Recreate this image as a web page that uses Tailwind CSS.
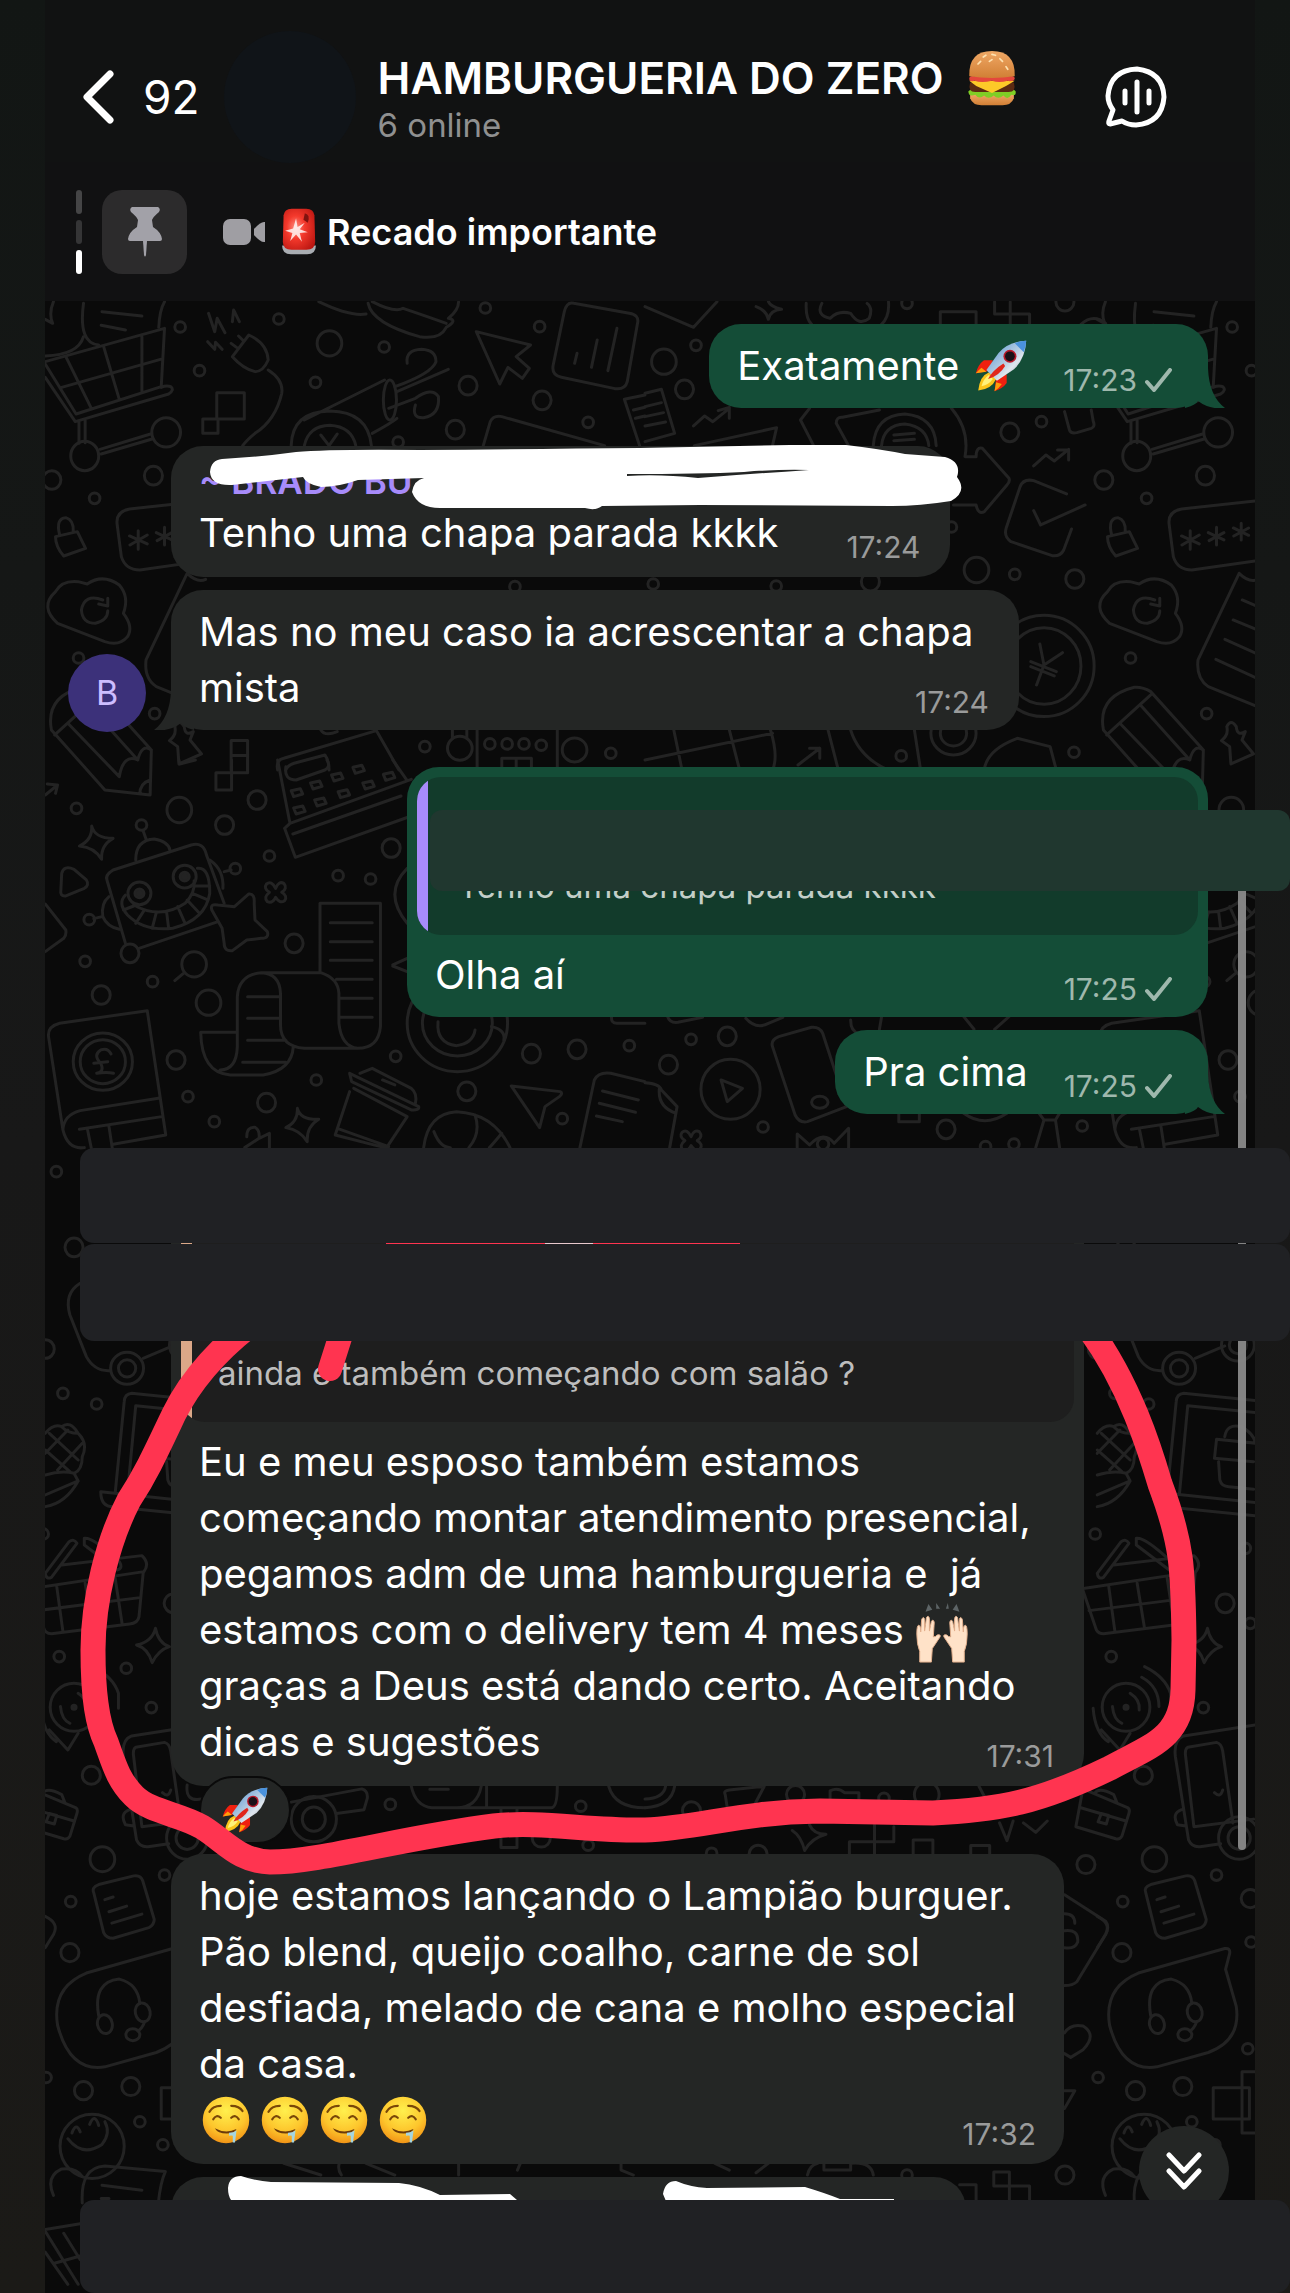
<!DOCTYPE html>
<html lang="pt-BR">
    <head>
        <meta charset="UTF-8">
        <meta name="viewport" content="width=device-width, initial-scale=1.0">
        <title>Hamburgueria do Zero</title>
        <script src="https://cdn.jsdelivr.net/npm/@tailwindcss/browser@4"></script>
    </head>
    <body class="bg-[#181818] font-['Inter','Liberation_Sans',sans-serif] text-white">

        <!-- Emojis -->
        <svg class="absolute w-0 h-0" aria-hidden="true">
          <defs>
            <linearGradient id="gBun" x1="0" y1="0" x2="0" y2="1"><stop offset="0" stop-color="#f0a865"/><stop offset="1" stop-color="#d17f35"/></linearGradient>
            <radialGradient id="gFace" cx=".5" cy=".3" r=".75"><stop offset="0" stop-color="#fff04d"/><stop offset=".6" stop-color="#fdc52c"/><stop offset="1" stop-color="#ef8a12"/></radialGradient>
            <linearGradient id="gRocket" x1="0" y1="0" x2="1" y2="1"><stop offset="0" stop-color="#4a8fd2"/><stop offset=".5" stop-color="#b4cbe2"/><stop offset=".65" stop-color="#dfe6ee"/><stop offset="1" stop-color="#7f8c9b"/></linearGradient>
            <radialGradient id="gSiren" cx=".4" cy=".45" r=".7"><stop offset="0" stop-color="#ff8d80"/><stop offset=".4" stop-color="#f4392c"/><stop offset="1" stop-color="#b91510"/></radialGradient>
            <symbol id="rocket" viewBox="0 0 64 64">
              <path d="M22 25 L11 25 Q4 30 1 41 L17 38Z M39 42 L39 53 Q34 60 24 63 L26 47Z" fill="#f0200f"/>
              <path d="M8 34 Q4 37 1 41 L14 39Z M33 54 Q29 60 24 63 L26 52Z" fill="#ff9d0a"/>
              <path d="M17 40 Q6 44 4 62 Q20 61 26 48Z" fill="#fbc51b"/>
              <path d="M17 43 Q10 48 8 57 Q17 55 22 48Z" fill="#fff27a"/>
              <path d="M63 1 Q41 2 29 16 L14 37 L27 50 L48 36 Q62 23 63 1Z" fill="url(#gRocket)"/>
              <path d="M63 1 Q55 1 49 4 L60 15 Q63 8 63 1Z" fill="#4a92dd"/>
              <path d="M35 29 Q22 37 16 48 Q30 44 37 32Z" fill="#e1261c"/>
              <circle cx="43" cy="20" r="8" fill="#b9192a"/><circle cx="43" cy="20" r="6" fill="#1b1118"/>
            </symbol>
            <symbol id="burger" viewBox="0 0 64 64">
              <path d="M7 50 H57 V55 Q54 63 44 63 H20 Q10 63 7 55Z" fill="url(#gBun)"/>
              <path d="M5 47 Q9 43 14 46 H50 Q56 43 59 47 Q60 53 54 51 Q50 58 45 52 Q39 57 34 52 Q28 57 23 52 Q17 57 13 51 Q5 54 5 47Z" fill="#7fce25"/>
              <path d="M7 37 H57 Q60 48 51 48 H13 Q4 48 7 37Z" fill="#5b2a12"/>
              <path d="M6 35 H58 L48 41 L32 49 L14 41Z" fill="#fdc928"/>
              <path d="M6 33 Q6 29 12 30 H52 Q58 29 58 33 Q56 37 50 35 Q40 38 32 35 Q20 38 12 35 Q6 37 6 33Z" fill="#e4473c"/>
              <path d="M6 30 Q5 1 32 1 Q59 1 58 30 Q32 34 6 30Z" fill="url(#gBun)"/>
              <path d="M22 8 l3 -2 M32 5 l4 1 M41 10 l3 3 M29 13 l3 -2 M16 16 l3 -3 M48 19 l2 3" stroke="#ffe2b0" stroke-width="2" stroke-linecap="round"/>
            </symbol>
            <symbol id="siren" viewBox="0 0 48 64">
              <path d="M1 51 H47 Q47 63 35 63 H13 Q1 63 1 51Z" fill="#a9adb2"/>
              <path d="M2 46 L3 10 Q4 1 14 1 H34 Q44 1 45 10 L46 46 Q46 57 34 57 H14 Q2 57 2 46Z" fill="url(#gSiren)"/>
              <path d="M32 7 Q40 9 36 20 L30 16Z" fill="#80130f"/>
              <path d="M20 14 L22 26 L32 20 L25 29 L36 33 L25 34 L28 46 L20 36 L12 45 L15 34 L5 31 L16 28Z" fill="#fff" opacity=".8"/>
            </symbol>
            <symbol id="hands" viewBox="0 0 54 64">
              <path d="M10 10 L13 2 L17 8Z M21 7 L21 1 L25 7Z M31 7 L33 1 L34 7Z M38 8 L42 2 L45 10Z" fill="#5d6466"/>
              <path id="hand" d="M4 62 L4 51 Q1 44 1 33 Q1 24 3 24 Q5 24 5 31 L6 18 Q8 14 9 18 L9 30 L11 16 Q13 13 14 17 L14 30 L16 20 Q18 17 19 21 L18 36 Q21 36 22 34 Q26 33 25 36 L17 48 L16 62Z" fill="#ffe2c8" stroke="#e3b08c" stroke-width="1"/>
              <use href="#hand" transform="matrix(-1 0 0 1 54 0)"/>
            </symbol>
            <symbol id="drool" viewBox="0 0 64 64">
              <circle cx="32" cy="32" r="31" fill="url(#gFace)"/>
              <path d="M10 21 Q14 13 25 13 M39 13 Q50 13 54 20 M15 31 Q19 24 25 29 M39 29 Q45 24 49 31" fill="none" stroke="#7a4708" stroke-width="3" stroke-linecap="round"/>
              <path d="M17 43 Q32 51 46 44 Q44 50 33 50 Q21 50 17 43Z" fill="#6a3a0b"/>
              <path d="M36 49 Q42 49 46 46 L44 62 L41 62 L41 53 Q39 52 36 53Z" fill="#a5d5e0"/>
            </symbol>
          </defs>
        </svg>

        <div class="relative min-h-screen overflow-hidden bg-linear-to-b from-[#121614] via-[#181818] to-[#1b1a17] pl-[45px] pr-[35px]">
          <main class="relative min-h-screen bg-[#0a0a0a] overflow-hidden">

            <!-- Papel de parede -->
            <svg class="absolute inset-0 w-full h-full [&_*]:[vector-effect:non-scaling-stroke]" fill="none" stroke="#232323" stroke-width="3" stroke-linecap="round" stroke-linejoin="round" aria-hidden="true">
              <defs>
                <ellipse id="s" rx="13" ry="16"/>
                <ellipse id="m" rx="22" ry="28"/>
                <ellipse id="l" rx="30" ry="38"/>
                <ellipse id="s2" rx="13" ry="14"/>
                <ellipse id="m2" rx="22" ry="24"/>
                <ellipse id="l2" rx="30" ry="33"/>
                <g id="tile">
                  <g transform="translate(-45 290) scale(.4113 .3333)">
                    <path d="M203 40Q190 160 240 165M400 35Q388 60 386 112M248 65L345 78M246 106L305 120M130 35Q118 70 128 100L110 88M110 198Q190 195 203 140"/>
                    <path d="M110 215L400 115L392 290L185 372L110 222M110 262L183 395L410 312Q425 300 415 290Q405 285 392 292M160 200L222 355M252 170L290 328M345 140V305M150 292L390 208M192 395V460M207 390V458M243 478L366 432M246 492L370 447"/>
                    <ellipse cx="206" cy="498" rx="34" ry="44"/><ellipse cx="404" cy="427" rx="35" ry="44"/>
                    <path d="M135 740L188 725L208 775L155 798Q135 770 135 740ZM145 735Q135 685 160 683Q180 690 178 725"/>
                    <path d="M500 632L315 657Q280 665 285 705L295 800Q305 840 340 840L500 812M336 722V778M315 738L358 762M358 735L316 765M400 712V765M380 728L418 750M418 728L382 752M460 700V750M441 714L478 736M478 714L442 738"/>
                    <path d="M135 905Q150 870 190 875L212 882Q250 850 290 885Q315 920 300 970Q325 1010 310 1040Q290 1070 255 1055L140 1000Q95 950 135 905ZM250 930Q205 910 198 960Q200 1000 232 1000Q262 990 262 962M262 925V948L240 942"/>
                    <path d="M455 850L355 1110Q350 1165 380 1190L500 1250M455 850Q480 880 500 868"/>
                    <path d="M200 1192Q110 1220 125 1320L255 1500L365 1515L368 1380L240 1205Q220 1190 200 1192M133 1335L240 1215M165 1300L290 1460M215 1245L335 1410M290 1460Q300 1390 335 1410Q345 1360 368 1380M340 1512Q340 1480 365 1470"/>
                    <path d="M412 1352Q430 1335 425 1310Q435 1285 448 1310Q450 1340 470 1325L462 1350L490 1392L435 1422L432 1370Z"/>
                    <use href="#s" x="438" y="111"/><use href="#m" x="373" y="557"/><use href="#m" x="126" y="570"/><use href="#s" x="230" y="625"/><use href="#s" x="191" y="1104"/><use href="#s" x="376" y="1271"/><use href="#s" x="485" y="242"/>
                  </g>
                  <g transform="translate(-45 760) scale(.4113 .3333)">
                    <path d="M260 360Q255 345 275 330L465 255Q495 245 502 285L545 430M260 360L305 550M338 565L530 485M330 300Q330 240 375 237Q410 245 413 270M355 237L348 212"/>
                    <ellipse cx="339" cy="400" rx="28" ry="34"/><ellipse cx="449" cy="350" rx="28" ry="34"/>
                    <ellipse cx="339" cy="400" rx="11" ry="13" fill="#232323"/><ellipse cx="449" cy="350" rx="11" ry="13" fill="#232323"/>
                    <path d="M305 405Q285 430 310 465Q350 515 420 505Q500 480 510 400Q510 320 480 325M325 435Q390 480 450 430Q475 400 472 362M300 450L325 438M330 490L350 452M370 505L380 458M410 505L405 455M450 490L432 440M485 460L455 420M505 420L468 400M510 378H472"/>
                    <path d="M265 410Q245 430 250 470Q260 500 290 508M248 470L228 476M510 300Q545 330 542 385M545 335L562 330"/>
                    <path d="M223 198Q230 235 275 235Q245 255 247 298Q230 262 193 258Q225 240 223 198ZM150 340Q155 315 180 328L210 360Q218 375 205 385L160 408Q145 410 148 390Z"/>
                    <path d="M110 432L160 510Q162 525 155 535L110 575M110 105L140 75L115 72M140 75L135 100M446 640L425 662"/>
                    <path d="M118 830Q115 800 145 790L358 752L403 1125L275 1153M118 830L153 1110Q165 1170 205 1163M153 1110Q155 1065 195 1052L385 1015M193 1108L393 1070M213 1110L222 1165M265 1100L273 1165"/>
                    <ellipse cx="250" cy="905" rx="72" ry="86"/><ellipse cx="250" cy="905" rx="55" ry="66"/>
                    <path d="M270 882Q262 862 245 870Q225 885 245 910Q255 935 235 940Q260 935 276 940M228 910L262 905"/>
                    <use href="#l" x="436" y="150"/><use href="#m" x="246" y="705"/><use href="#m" x="316" y="580"/><use href="#l" x="507" y="728"/><use href="#l" x="472" y="613"/><use href="#m" x="428" y="900"/>
                    <use href="#s" x="344" y="195"/><use href="#s" x="217" y="479"/><use href="#s" x="572" y="326"/><use href="#s" x="186" y="145"/><use href="#s" x="207" y="604"/><use href="#s" x="371" y="665"/><use href="#s" x="457" y="1010"/><use href="#s" x="137" y="1235"/>
                  </g>
                  <g transform="translate(-45 1220) scale(.4113 .3333)">
                    <path d="M195 190Q155 220 170 285L210 410Q230 455 268 452M348 415L420 378"/>
                    <ellipse cx="309" cy="445" rx="40" ry="48"/><ellipse cx="309" cy="445" rx="21" ry="26"/><ellipse cx="452" cy="375" rx="40" ry="48"/><ellipse cx="452" cy="375" rx="21" ry="26"/>
                    <path d="M110 640Q130 610 150 620Q170 600 190 640Q215 670 200 710Q200 750 180 760L190 783Q160 850 110 860M110 765Q150 750 180 760M190 783L110 825M120 640L190 720M140 750L200 670M110 700L165 630M110 690L170 755M150 620Q165 640 190 640"/>
                    <path d="M498 542L320 520Q303 522 302 545L280 820M498 578L330 557L310 820M245 815L498 848M245 815Q245 860 275 860L498 888"/>
                    <path d="M498 670L400 658L395 715L490 725M405 725L408 780Q412 800 430 800L490 808M420 650Q425 610 460 620Q490 640 495 670"/>
                    <path d="M110 1060L168 965Q180 955 187 970L125 1072Q112 1080 110 1060M205 955Q225 950 290 1025Q300 1045 285 1050L205 975ZM150 1035L345 1007Q365 1030 350 1055L80 1105M348 1060L338 1190Q335 1210 315 1212L135 1240Q115 1245 108 1230L75 1110M90 1172L340 1133M138 1100L153 1235M207 1090L225 1225M280 1075L297 1212"/>
                    <path d="M378 1225Q385 1270 412 1280Q385 1290 370 1328Q360 1285 332 1275Q370 1265 378 1225Z"/>
                    <ellipse cx="180" cy="1462" rx="58" ry="72"/><ellipse cx="180" cy="1462" rx="5" ry="6" fill="#232323"/>
                    <path d="M225 1340Q275 1370 288 1420V1465M218 1372Q260 1400 260 1460M190 1420Q215 1440 212 1470M147 1460Q150 1500 170 1510M100 1465Q105 1540 137 1565M120 1530L165 1590L190 1540"/>
                    <use href="#m" x="180" y="82"/><use href="#m" x="110" y="387"/><use href="#s" x="153" y="520"/><use href="#s" x="235" y="552"/><use href="#s" x="105" y="942"/><use href="#m" x="421" y="1150"/><use href="#s" x="470" y="985"/><use href="#s" x="482" y="1210"/><use href="#s" x="144" y="1310"/><use href="#s" x="307" y="1345"/><use href="#s" x="368" y="1463"/>
                  </g>
                  <g transform="translate(-45 1700) scale(.4113 .3782)">
                    <path d="M75 235L185 285Q190 290 187 300L170 360Q165 370 155 367L58 335L75 235M70 285L180 320M105 245Q115 230 150 250L158 272M120 300L138 305L132 328L112 322Z"/>
                    <path d="M500 65L320 95Q295 105 300 150L332 370Q340 390 360 388L410 380M330 125L400 112Q412 115 415 135L440 325M330 125Q322 130 325 150L345 335L490 315M395 245Q410 260 415 238M315 290Q290 300 305 330L325 333"/>
                    <ellipse cx="455" cy="365" rx="50" ry="56"/><ellipse cx="455" cy="365" rx="27" ry="30"/>
                    <path d="M228 510Q222 495 240 488L325 465Q342 462 347 478L375 580Q375 595 362 602L275 630Q258 630 252 615ZM255 528L275 521M265 560L308 545M272 590L345 566M110 572Q145 590 130 620L110 655"/>
                    <path d="M210 722L420 657Q434 655 432 670L422 712L448 810Q460 900 380 932L255 970Q170 985 140 860Q125 760 210 722ZM240 835Q225 745 290 738Q335 750 340 802M352 850Q345 870 335 875"/>
                    <ellipse cx="255" cy="857" rx="18" ry="25" transform="rotate(-10 255 857)"/><ellipse cx="347" cy="826" rx="18" ry="25" transform="rotate(-10 347 826)"/><ellipse cx="323" cy="885" rx="17" ry="16"/>
                    <ellipse cx="224" cy="1180" rx="78" ry="85"/>
                    <path d="M165 1160Q200 1210 248 1175Q270 1145 255 1115M175 1145Q185 1115 195 1142M218 1122Q230 1090 240 1125"/>
                    <path d="M392 1025H480V1108H392ZM462 983H520V1145H462Z"/>
                    <path d="M130 1310Q110 1260 150 1240Q185 1235 200 1260M200 1330Q195 1235 255 1232L402 1247Q390 1275 385 1330M248 1283L345 1296M246 1318H265M110 1400L195 1385M110 1405L190 1545M110 1460L165 1545M155 1410L195 1480M130 1490L195 1470"/>
                    <use href="#m2" x="222" y="199"/><use href="#l2" x="249" y="421"/><use href="#m2" x="170" y="668"/><use href="#m2" x="203" y="1033"/><use href="#m2" x="318" y="1022"/><use href="#m2" x="482" y="525"/>
                    <use href="#s2" x="400" y="463"/><use href="#s2" x="172" y="533"/><use href="#s2" x="340" y="1115"/><use href="#s2" x="396" y="1176"/><use href="#s2" x="112" y="998"/><use href="#s2" x="476" y="922"/><use href="#s2" x="484" y="640"/>
                  </g>
                </g>
              </defs>
              <use href="#tile"/>
              <use href="#tile" x="1052"/>
              <g transform="translate(-45 290) scale(.4113 .3333)">
                <path d="M565 200L605 135Q650 160 652 210Q640 245 620 245Q590 235 565 200ZM580 138L590 150M562 160L575 172M652 240Q690 270 685 310Q670 390 620 430Q600 450 590 467M507 70L522 125L528 85L547 128M565 95L568 60L582 95M505 155L522 178L524 157L540 178M527 308H594V387H527ZM493 387H530V430H493Z"/>
                <path d="M708 467Q710 365 802 363Q895 365 903 467M740 467Q750 408 802 406Q855 410 865 467M780 435L800 467L820 432M740 390L935 270M905 430Q950 400 965 385M990 220Q985 180 1025 178Q1060 180 1060 215Q1050 250 960 290M965 305L1090 238M1010 345Q1000 385 1030 383Q1070 375 1066 320Q1050 290 1010 325L945 355"/>
                <ellipse cx="948" cy="330" rx="16" ry="60"/>
                <path d="M775 35Q850 80 890 72M895 40Q905 100 1020 140Q1070 150 1085 112Q1115 90 1090 85Q1115 60 1115 35M905 35Q960 70 980 55Q1040 80 1085 100"/>
                <path d="M1158 125L1290 165L1255 200L1287 235L1270 265L1235 232L1215 282ZM1395 40L1530 70Q1555 75 1550 100L1525 275Q1520 300 1495 296L1365 262Q1340 255 1345 225L1372 65Q1378 35 1395 40ZM1403 190L1397 220M1452 150L1438 232M1500 115L1478 242M1175 467L1192 395Q1200 375 1220 380L1470 467M1568 315L1518 328L1555 467M1540 360L1568 352M1545 385L1568 378"/>
                <path d="M562 1352H602V1440M562 1352V1440M562 1397H602M675 1440Q670 1410 690 1405L915 1322L970 1440M695 1440Q700 1425 715 1420L790 1395Q800 1410 800 1440M780 1320Q790 1340 820 1325M1100 1320V1345M1135 1320V1345M1160 1320V1440M1355 1320V1440M1220 1440V1405H1292V1440M1255 1405V1440"/>
                <ellipse cx="1118" cy="1375" rx="30" ry="36"/><ellipse cx="1397" cy="1380" rx="30" ry="36"/>
                <use href="#l" x="801" y="160"/><use href="#m" x="1138" y="287"/><use href="#m" x="1318" y="331"/><use href="#m" x="1107" y="419"/>
                <use href="#s" x="678" y="87"/><use href="#s" x="767" y="277"/><use href="#s" x="934" y="171"/><use href="#s" x="1180" y="54"/><use href="#s" x="1312" y="110"/><use href="#s" x="1430" y="397"/><use href="#s" x="968" y="456"/><use href="#s" x="1252" y="890"/><use href="#s" x="1033" y="1370"/><use href="#s" x="1485" y="1390"/><use href="#s" x="1191" y="1362"/><use href="#s" x="1233" y="1362"/><use href="#s" x="1274" y="1362"/><use href="#s" x="1316" y="1366"/>
              </g>
              <g transform="translate(600 290) scale(.4113 .3333)">
                <path d="M0 50L118 112L175 35M270 50Q295 60 300 88Q305 60 332 58Q305 50 300 35M392 40Q390 85 405 103M592 35Q595 80 575 103M430 40Q415 75 450 85Q470 60 500 70Q520 110 545 85Q555 55 540 40M718 103V65H805V103M850 35V72H935V103M888 35V103M1060 103Q1090 70 1120 100"/>
                <path d="M118 408L145 378L165 395L205 355M178 362L205 352V385M945 528L975 495L995 513L1030 478M1003 480H1030V510M0 310L40 298L72 430L0 455M0 350L40 338M0 380L45 368M0 408L50 396M120 467L320 413L310 467"/>
                <path d="M400 355L378 390L410 467M495 467L465 400Q465 380 480 382L570 360M555 467Q560 375 632 372Q705 380 708 467M575 467Q580 405 632 402Q685 410 690 467M605 435L655 430M605 452L655 448M745 355Q790 420 778 500H805Q805 470 820 475L885 565Q888 575 880 585L825 665Q810 675 805 645H750M1020 365L1032 420Q1035 432 1050 428L1085 415Q1095 410 1090 395L1085 360"/>
                <path d="M1025 612L945 572Q920 565 912 590L878 715Q872 740 890 755L990 797Q1010 800 1018 780L1037 717M945 662L962 705L1070 645"/>
                <ellipse cx="970" cy="1128" rx="122" ry="152"/><ellipse cx="970" cy="1128" rx="90" ry="115"/>
                <path d="M960 1062L970 1125L952 1185M970 1125L1015 1088M938 1115L1000 1145M938 1130L995 1158M1452 930L1500 955M1430 990L1500 1025M1410 1048L1500 1098M1388 1108L1500 1172"/>
                <ellipse cx="750" cy="1330" rx="55" ry="65"/><ellipse cx="750" cy="1330" rx="32" ry="38"/>
                <path d="M825 1440Q830 1380 905 1345L985 1370L1000 1440M372 1425L425 1375V1405M400 1375H425M70 1320L90 1440M205 1320L230 1440M0 1410L310 1330M305 1320Q325 1400 310 1440M445 1320L470 1440M500 1320Q520 1400 590 1440M655 1320L670 1440"/>
                <use href="#l" x="46" y="215"/><use href="#l" x="806" y="840"/><use href="#m" x="96" y="298"/><use href="#m" x="1021" y="35"/><use href="#m" x="887" y="427"/><use href="#m" x="1045" y="867"/><use href="#m" x="548" y="875"/>
                <use href="#s" x="637" y="40"/><use href="#s" x="124" y="166"/><use href="#s" x="964" y="395"/><use href="#s" x="899" y="853"/><use href="#s" x="745" y="711"/><use href="#s" x="623" y="1398"/><use href="#s" x="1043" y="1387"/><use href="#s" x="20" y="882"/><use href="#s" x="319" y="888"/>
              </g>
              <g transform="translate(-45 760) scale(.4113 .3333)">
                <path d="M675 0L705 190L1000 58M692 205L718 292L1000 168M692 205L705 190M712 222L975 108M695 20Q690 60 720 60L790 30Q805 20 795 0M955 0L990 62"/>
                <path d="M708 92l22-6 6 16-22 8zM755 69l22-6 6 16-22 8zM806 45l22-6 6 16-22 8zM858 22l22-6 6 16-22 8zM714 144l22-6 6 16-22 8zM765 120l22-6 6 16-22 8zM822 95l22-6 6 16-22 8zM882 69l22-6 6 16-22 8zM932 43l22-6 6 16-22 8z"/>
                <path d="M605 402Q620 400 618 430L620 480L650 515Q655 535 635 535L600 540L565 572Q545 575 545 550L540 505L515 450Q510 430 530 435L570 440Z"/>
                <path id="clover" d="M670 385Q660 360 648 372Q640 385 655 397Q640 412 650 425Q662 432 670 412Q680 432 692 422Q700 408 685 397Q700 385 690 370Q678 362 670 385Z"/>
                <path d="M435 0L437 12L475 0M525 38H563V90H525ZM563 0V38H602V0M990 325Q930 400 990 490M955 615L990 595M955 618L990 635"/>
                <path d="M778 638V430H925V800Q920 865 870 865H740Q680 860 682 790V700Q680 640 635 638Q580 645 577 710V860Q575 930 535 930M635 638H780Q822 655 824 700V790Q830 860 870 865M577 817H488Q490 940 560 945H640Q710 930 713 860M803 488H905M803 545H905M803 601H905M818 658H905M826 715H905M826 772H905M602 710H680M602 775H680M602 841H695M590 907H695"/>
                <path d="M850 995L815 1125L935 1163M850 940L1018 1040Q1020 1052 1000 1050L855 965ZM875 940L905 925L1000 985Q1015 1000 1010 1030M860 985L990 1070L940 1163M820 1105L945 1160M930 960L960 975"/>
                <path d="M723 1045Q730 1080 775 1078Q745 1100 747 1145Q730 1110 695 1103Q725 1085 723 1045ZM600 1130Q600 1100 620 1102Q632 1110 630 1135L655 1120V1163M630 1135L595 1163"/>
                <path d="M1030 1163Q1040 1060 1110 1055Q1200 1060 1240 1163M1055 1115Q1070 1163 1095 1163M1155 1065Q1170 1120 1140 1163M1220 1120Q1200 1150 1190 1163M1243 978L1362 995Q1370 1000 1360 1010L1325 1040L1312 1103ZM1410 1163L1445 960Q1455 935 1485 940L1568 965M1465 993L1552 1020M1457 1030L1545 1057M1450 1068L1513 1085M1487 770Q1485 790 1500 790H1568"/>
                <ellipse cx="1112" cy="790" rx="122" ry="145"/><ellipse cx="1112" cy="790" rx="85" ry="98"/>
                <path d="M1065 785Q1060 850 1110 857Q1150 850 1155 810M1195 800Q1230 810 1225 840"/>
                <use href="#m" x="625" y="120"/><use href="#m" x="546" y="195"/><use href="#m" x="951" y="264"/><use href="#m" x="715" y="550"/><use href="#m" x="648" y="1028"/><use href="#m" x="1135" y="994"/><use href="#m" x="1292" y="881"/><use href="#m" x="1403" y="868"/>
                <use href="#s" x="655" y="288"/><use href="#s" x="822" y="347"/><use href="#s" x="901" y="357"/><use href="#s" x="521" y="1085"/><use href="#s" x="962" y="889"/><use href="#s" x="769" y="960"/><use href="#s" x="1530" y="857"/><use href="#s" x="1367" y="1076"/>
              </g>
              <g transform="translate(600 760) scale(.4113 .3333)">
                <ellipse cx="208" cy="988" rx="72" ry="90"/><ellipse cx="425" cy="1027" rx="20" ry="18"/><ellipse cx="433" cy="1152" rx="14" ry="17"/>
                <path d="M185 960L237 985L200 1025ZM310 860Q305 840 325 830L405 802Q425 800 432 820L490 1040L395 1085Q375 1090 365 1065ZM55 770Q60 790 80 787L140 772M245 775Q270 810 300 790L335 772M500 780Q500 815 520 820M575 772L570 808M775 770L800 808M850 808L885 770M0 968Q35 970 40 990L78 1040L60 1163M35 985Q30 1040 75 1060M370 1163V1122L400 1155Q435 1110 460 1150L495 1105V1163M617 1055V1085H667V1055M775 1060Q825 1105 880 1060M955 1055L970 1080H998L1010 1055M970 1080L950 1163M998 1080L1008 1163"/>
                <use href="#clover" x="-558" y="745"/>
                <use href="#m" x="200" y="829"/><use href="#m" x="57" y="914"/><use href="#m" x="732" y="1108"/><use href="#s" x="112" y="838"/><use href="#s" x="287" y="1101"/><use href="#s" x="1063" y="1098"/><use href="#s" x="828" y="1160"/><use href="#s" x="897" y="1152"/>
              </g>
              <g transform="translate(-45 1700) scale(.4113 .3782)">
                <ellipse cx="763" cy="315" rx="55" ry="60"/><ellipse cx="763" cy="315" rx="28" ry="32"/>
                <path d="M708 270L880 235Q895 240 893 260L885 290L818 300M1000 228Q1010 280 1050 285H1340Q1355 285 1355 228M1183 228V285M1045 236H1090M1170 228Q1160 285 1110 285M1218 290V390H1257V290M1480 228Q1495 285 1568 285M455 225Q450 270 490 262M690 1225L780 1256M825 1225Q820 1240 830 1256M890 1225L960 1256M1115 1225V1256M1265 1225L1258 1243M1510 1225V1243L1540 1256"/>
                <use href="#m2" x="1316" y="365"/><use href="#s2" x="949" y="276"/><use href="#s2" x="1412" y="281"/><use href="#s2" x="1430" y="384"/>
              </g>
              <g transform="translate(600 1700) scale(.4113 .3782)">
                <path d="M1020 515L1120 585Q1130 600 1120 620L1050 745Q1040 755 1020 755M1020 565Q1045 565 1045 590M1020 610Q1055 605 1052 640Q1045 660 1020 655M1020 880Q1035 855 1065 862Q1100 885 1065 925L1035 945L1020 935M1020 1080L1045 1033H1020"/>
                <path d="M0 285Q65 280 72 228M0 262Q45 260 50 228M195 250Q190 240 205 238L290 228L260 290L200 285ZM450 265V240Q470 230 485 245L520 245V265M400 330Q410 355 440 355Q405 365 388 398Q380 360 358 345M497 408V375H558V408M558 330V375H605V335M652 408V370H700V408M792 408V385H838V408M862 325L880 372L895 320M920 325L950 350L978 320M812 228L830 265"/>
                <path d="M395 1256Q400 1230 420 1225M435 1225V1243H500V1225Q550 1220 555 1256M848 1248H886V1285H848ZM886 1285H935V1322M886 1285V1322M765 1282H805V1322M170 1225L205 1243M300 1225L270 1250"/>
                <use href="#m2" x="1072" y="435"/><use href="#m2" x="1021" y="1256"/><use href="#m2" x="113" y="293"/><use href="#m2" x="366" y="250"/><use href="#l2" x="685" y="250"/><use href="#m2" x="275" y="408"/>
                <use href="#s2" x="581" y="260"/><use href="#s2" x="162" y="405"/><use href="#s2" x="637" y="1256"/>
              </g>
            </svg>

            <!-- Topo -->
            <header class="relative bg-[#111212]">
              <div class="flex items-center h-[162px] pt-8 pl-[38px] pr-[88px]">
                <button class="flex items-center gap-7 text-[46px] leading-[52px]" aria-label="Voltar, 92 não lidas">
                  <svg class="w-8 h-[54px]" viewBox="0 0 32 54" fill="none" stroke="#fff" stroke-width="7" stroke-linecap="round" stroke-linejoin="round"><path d="M27 4 L4 27 L27 50"/></svg>
                  92
                </button>
                <div class="w-[132px] h-[132px] shrink-0 ml-6 mr-[22px] rounded-full bg-[#101418]"></div>
                <div class="grow">
                  <h1 class="flex items-center gap-5 text-[44px] leading-[52px] font-semibold whitespace-nowrap">HAMBURGUERIA DO ZERO
                    <svg class="w-14 h-14" role="img" aria-label="hambúrguer"><use href="#burger"/></svg>
                  </h1>
                  <p class="text-[33px] leading-[38px] text-[#8f9090]">6 online</p>
                </div>
                <button aria-label="Conversa de voz">
                  <svg class="w-[62px] h-[62px]" viewBox="0 0 62 62" fill="none" stroke="#fff" stroke-width="5" stroke-linecap="round" stroke-linejoin="round">
                    <path d="M8 44 Q3 37 3 30 Q5 4 32 3 Q58 6 59 31 Q57 57 31 59 Q23 59 17 55 L5 58 Q3 58 4 55 Z"/>
                    <path d="M20 25 V37 M32 16 V46 M44 25 V37"/>
                  </svg>
                </button>
              </div>
              <div class="flex items-center h-[139px] pl-[31px] bg-[#111112]">
                <div class="flex flex-col gap-1.5">
                  <span class="w-1.5 h-6 rounded-full bg-[#454546]"></span>
                  <span class="w-1.5 h-6 rounded-full bg-[#353536]"></span>
                  <span class="w-1.5 h-6 rounded-full bg-white"></span>
                </div>
                <div class="flex items-center justify-center w-[85px] h-[84px] ml-5 rounded-[20px] bg-[#2c2b2c]">
                  <svg class="w-9 h-[50px]" viewBox="0 0 36 50" fill="#a2a1a8"><path d="M5 0 H31 Q34 2 32 5 Q26 10 25 13 L26 20 Q34 25 35 32 Q35 34 33 34 H3 Q1 34 1 32 Q2 25 10 20 L11 13 Q10 10 4 5 Q2 2 5 0Z"/><path d="M16 34 H20 L19 48 Q18 51 17 48Z"/></svg>
                </div>
                <svg class="w-[42px] h-[26px] ml-9" viewBox="0 0 42 26" fill="#9f9ea3"><rect width="28" height="26" rx="7"/><path d="M31 10 Q38 2 42 3 V23 Q38 24 31 16Z"/></svg>
                <svg class="w-9 h-[47px] ml-4 mr-2.5" role="img" aria-label="sirene"><use href="#siren"/></svg>
                <p class="text-[36px] leading-[44px] font-semibold">Recado importante</p>
              </div>
            </header>

            <!-- Mensagens -->
            <section class="relative flex flex-col items-start pl-[126px] pr-[47px] pt-[23px] text-[40px] leading-[56px] whitespace-nowrap">

              <article class="relative self-end flex items-end gap-9 py-3.5 pl-7 pr-9 rounded-[32px] bg-[#144d37]">
                <svg class="absolute -right-[17px] bottom-0 w-10 h-10" viewBox="0 0 40 40" fill="#144d37"><path d="M0 40 Q11 37 13 33 Q25 42 40 40 Q24 28 23 0 H0Z"/></svg>
                <p class="relative flex items-center gap-4">Exatamente <svg class="w-[52px] h-[52px]" role="img" aria-label="foguete"><use href="#rocket"/></svg></p>
                <div class="relative flex items-center gap-2 mb-0.5 text-[30px] leading-6 text-[#9fb8ad]"><time>17:23</time><svg class="w-[27px] h-6" viewBox="0 0 27 24" fill="none" stroke="currentColor" stroke-width="4" stroke-linecap="round" stroke-linejoin="round"><path d="M2 14 L9 22 L25 2"/></svg></div>
              </article>

              <article class="mt-[38px] pt-3 pb-4 pl-7 pr-[30px] rounded-[32px] bg-[#242625]">
                <h2 class="text-[35px] leading-[47px] font-semibold text-[#a78bfa]">~ BRADO BU</h2>
                <div class="flex items-end gap-[68px]">
                  <p>Tenho uma chapa parada kkkk</p>
                  <time class="mb-0.5 text-[30px] leading-6 text-[#9a9b9b]">17:24</time>
                </div>
              </article>

              <article class="relative mt-[13px] py-3.5 pl-7 pr-[30px] w-[848px] rounded-[32px] bg-[#242625]">
                <svg class="absolute -left-[17px] bottom-0 w-10 h-10" viewBox="0 0 40 40" fill="#242625"><path d="M40 40 Q29 37 27 33 Q15 42 0 40 Q16 28 17 0 H40Z"/></svg>
                <div class="absolute -left-[103px] -bottom-0.5 flex items-center justify-center w-[78px] h-[78px] rounded-full bg-[#3c317a] text-[34px] text-[#cdbdff]">B</div>
                <p class="relative">Mas no meu caso ia acrescentar a chapa<br>mista</p>
                <time class="block -mt-[26px] mb-0.5 text-right text-[30px] leading-6 text-[#9a9b9b]">17:24</time>
              </article>

              <article class="self-end mt-[37px] w-[801px] p-2.5 pb-3.5 rounded-[32px] bg-[#144d37]">
                <blockquote class="flex h-[158px] rounded-[24px] overflow-hidden bg-[#123b2b] text-[33px] leading-[46px] text-[#c3cec8]">
                  <span class="w-[11px] bg-[#a78bfa]"></span>
                  <p class="self-end pl-[30px] pb-[26px]">Tenho uma chapa parada kkkk</p>
                </blockquote>
                <div class="flex items-end justify-between mt-3 pl-[18px] pr-[26px]">
                  <p>Olha aí</p>
                  <div class="flex items-center gap-2 mb-0.5 text-[30px] leading-6 text-[#9fb8ad]"><time>17:25</time><svg class="w-[27px] h-6" viewBox="0 0 27 24" fill="none" stroke="currentColor" stroke-width="4" stroke-linecap="round" stroke-linejoin="round"><path d="M2 14 L9 22 L25 2"/></svg></div>
                </div>
              </article>

              <article class="relative self-end flex items-end gap-9 mt-[13px] py-3.5 pl-7 pr-9 rounded-[32px] bg-[#144d37]">
                <svg class="absolute -right-[17px] bottom-0 w-10 h-10" viewBox="0 0 40 40" fill="#144d37"><path d="M0 40 Q11 37 13 33 Q25 42 40 40 Q24 28 23 0 H0Z"/></svg>
                <p class="relative">Pra cima</p>
                <div class="relative flex items-center gap-2 mb-0.5 text-[30px] leading-6 text-[#9fb8ad]"><time>17:25</time><svg class="w-[27px] h-6" viewBox="0 0 27 24" fill="none" stroke="currentColor" stroke-width="4" stroke-linecap="round" stroke-linejoin="round"><path d="M2 14 L9 22 L25 2"/></svg></div>
              </article>

              <article class="relative mt-[38px] w-[913px] p-2.5 pb-4 rounded-[32px] bg-[#242625]">
                <blockquote class="flex h-[260px] rounded-[24px] overflow-hidden bg-[#1e1e1e] text-[33px] leading-[46px] text-[#bdbdbd]">
                  <span class="w-[11px] bg-[#dba888]"></span>
                  <p class="self-end pl-[26px] pb-[26px]">ainda é também começando com salão ?</p>
                </blockquote>
                <p class="mt-3 pl-[18px]">Eu e meu esposo também estamos<br>começando montar atendimento presencial,<br>pegamos adm de uma hamburgueria e&nbsp; já<br>estamos com o delivery tem 4 meses <svg class="inline-block w-[54px] h-[62px] align-middle -my-2" role="img" aria-label="mãos para cima"><use href="#hands"/></svg><br>graças a Deus está dando certo. Aceitando<br>dicas e sugestões</p>
                <time class="block -mt-[26px] mb-0.5 pr-5 text-right text-[30px] leading-6 text-[#9a9b9b]">17:31</time>
                <button class="absolute left-7 -bottom-[58px] flex items-center justify-center w-[92px] h-[68px] rounded-full border-2 border-[#0a0a0a] bg-[#242625]" aria-label="Reação">
                  <svg class="w-[46px] h-[46px]"><use href="#rocket"/></svg>
                </button>
              </article>

              <article class="mt-[68px] w-[893px] pt-3.5 pb-4 pl-7 pr-7 rounded-[32px] bg-[#242625]">
                <p>hoje estamos lançando o Lampião burguer.<br>Pão blend, queijo coalho, carne de sol<br>desfiada, melado de cana e molho especial<br>da casa.</p>
                <div class="flex items-center gap-[11px] h-14 pl-[3px]">
                  <svg class="w-12 h-12" role="img" aria-label="babando"><use href="#drool"/></svg>
                  <svg class="w-12 h-12" role="img" aria-label="babando"><use href="#drool"/></svg>
                  <svg class="w-12 h-12" role="img" aria-label="babando"><use href="#drool"/></svg>
                  <svg class="w-12 h-12" role="img" aria-label="babando"><use href="#drool"/></svg>
                </div>
                <time class="block -mt-[26px] mb-0.5 text-right text-[30px] leading-6 text-[#9a9b9b]">17:32</time>
              </article>

              <article class="mt-[13px] -mb-10 w-[795px] h-[150px] rounded-[32px] bg-[#242625]"></article>
            </section>

            <button class="absolute right-[26px] bottom-[77px] flex items-center justify-center w-[90px] h-[90px] rounded-full bg-[#242625]" aria-label="Ir para o fim">
              <svg class="w-9 h-10" viewBox="0 0 36 40" fill="none" stroke="#fff" stroke-width="5" stroke-linecap="round" stroke-linejoin="round"><path d="M3 4 L18 20 L33 4 M3 20 L18 36 L33 20"/></svg>
            </button>
          </main>

          <!-- Riscos à mão -->
          <svg class="absolute inset-0 w-full h-full pointer-events-none" fill="none" stroke-linecap="round" stroke-linejoin="round" aria-hidden="true">
            <path fill="#fff" d="M222 459 Q260 457 296 452 Q330 449 420 450 Q540 449 640 448 L790 445 H846 Q880 449 905 454 L945 457 Q962 462 957 477 Q968 492 951 501 Q920 506 892 506 L700 505 L602 506 Q596 511 585 508 L440 508 Q418 508 412 492 Q414 480 424 478 L358 480 Q338 487 321 487 Q306 484 303 477 L232 485 Q211 486 210 472 Q211 460 222 459Z"/>
            <path fill="#242625" d="M627 474 Q700 474 744 472 Q780 469 809 470 Q750 474 698 478 Q660 474 627 476Z"/>
            <path fill="#fff" d="M228 2188 Q229 2176 241 2176 Q256 2181 271 2182 L399 2183 Q420 2185 440 2195 L510 2194 L524 2206 H240 Q228 2203 228 2188ZM663 2194 Q665 2181 676 2181 Q690 2187 707 2188 L805 2187 Q825 2193 840 2199 H894 V2206 H668Z"/>
            <path stroke="#ff3450" stroke-width="25" d="M262 1316 C215 1350 190 1382 174 1414 C156 1452 146 1474 129 1500 C108 1540 93 1600 93 1650 C93 1700 98 1725 106 1742 C114 1764 118 1780 134 1796 C150 1812 180 1814 202 1827 C225 1841 238 1861 270 1862 C320 1862 400 1838 494 1826 C540 1821 590 1831 645 1830 C700 1828 740 1812 820 1811 L933 1813 C1000 1810 1040 1802 1110 1768 C1150 1746 1182 1738 1183 1690 L1184 1640 C1183 1570 1183 1545 1160 1484 C1150 1450 1130 1385 1090 1330"/>
            <path stroke="#ff3450" stroke-width="24" d="M344 1325 L330 1369"/>
            <path stroke="#ff3450" stroke-width="4" stroke-linecap="butt" d="M386 1244 H740"/>
            <path stroke="#e9c9ce" stroke-width="4" stroke-linecap="butt" d="M545 1244 H593"/>
          </svg>

          <!-- Barra de rolagem -->
          <div class="absolute right-11 top-[860px] w-2 h-[990px] rounded-full bg-[#8a8a8a]/95"></div>

          <!-- Tarjas -->
          <div class="absolute left-[430px] right-0 top-[810px] h-[81px] rounded-xl bg-[#20372f]"></div>
          <div class="absolute left-20 right-0 top-[1148px] h-[95px] rounded-[14px] bg-[#202124]"></div>
          <div class="absolute left-20 right-0 top-[1244px] h-[97px] rounded-[14px] bg-[#202124]"></div>
          <div class="absolute left-20 right-0 top-[2200px] h-[93px] rounded-[14px] bg-[#202124]"></div>
        </div>

    </body>
</html>
